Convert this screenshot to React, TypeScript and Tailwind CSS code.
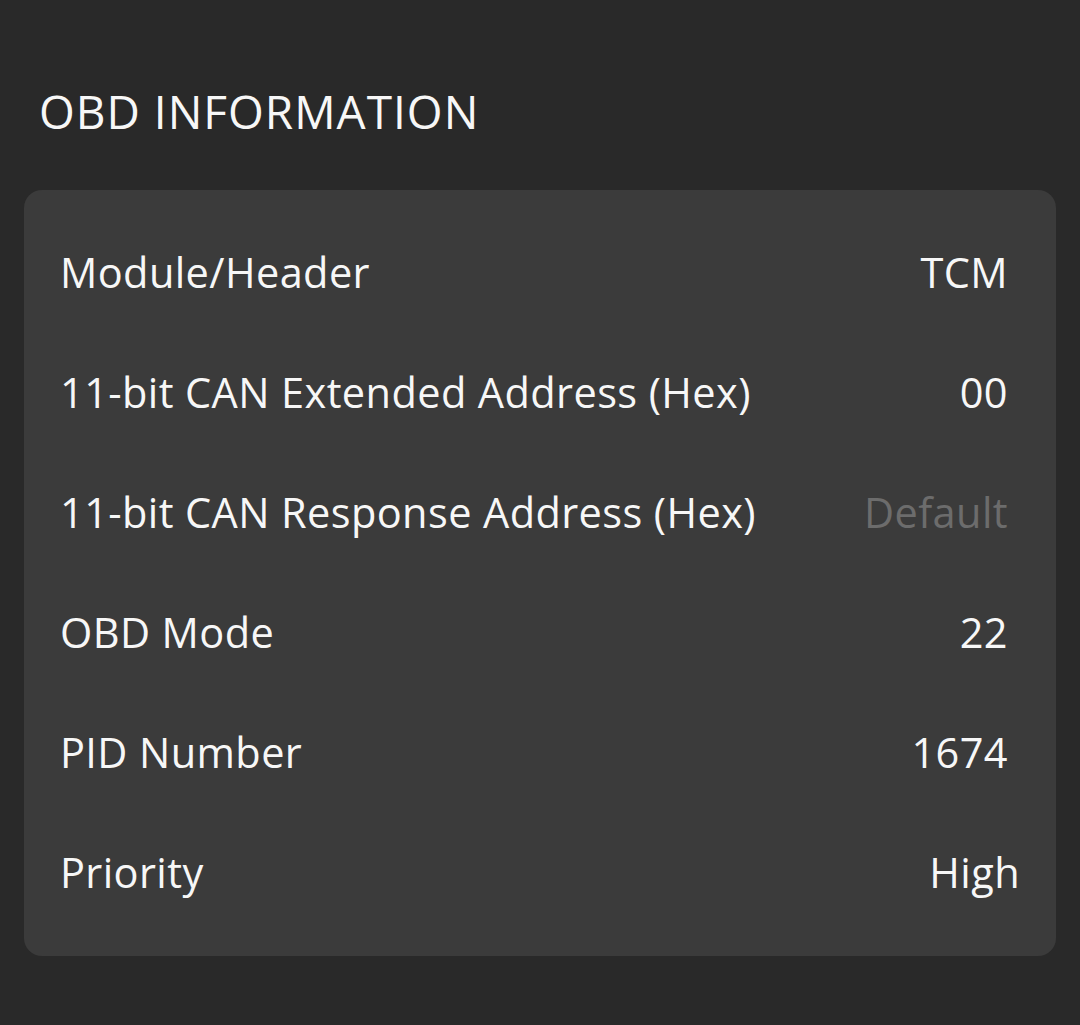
const rows = [
  { label: "Module/Header", value: "TCM" },
  { label: "11-bit CAN Extended Address (Hex)", value: "00" },
  { label: "11-bit CAN Response Address (Hex)", value: "Default", muted: true },
  { label: "OBD Mode", value: "22" },
  { label: "PID Number", value: "1674" },
  { label: "Priority", value: "High", wide: true },
];

const App = () => {
  return (
    <div
      className="min-h-screen w-full bg-[#292929] px-[24px] pt-[80px]"
      style={{ fontFamily: '"Open Sans", "Noto Sans", sans-serif' }}
    >
      {/* HEADER */}
      <h2 className="pl-[15px] text-[46px] leading-[63px] tracking-[1px] text-[#f7f7f7]">
        OBD INFORMATION
      </h2>

      {/* CARD */}
      <div className="mt-[47px] w-[1032px] rounded-[18px] bg-[#3b3b3b] pt-[22px] pb-[24px]">
        {rows.map((row) => (
          <div
            key={row.label}
            className={
              row.wide
                ? "flex h-[120px] items-center justify-between pl-[36px] pr-[36px]"
                : "flex h-[120px] items-center justify-between pl-[36px] pr-[48px]"
            }
          >
            <span className="text-[41.5px] tracking-[0.4px] text-[#f7f7f7]">
              {row.label}
            </span>
            <span
              className={
                row.muted
                  ? "text-[41.5px] tracking-[0.4px] text-[#6c6c6c]"
                  : "text-[41.5px] tracking-[0.4px] text-[#f7f7f7]"
              }
            >
              {row.value}
            </span>
          </div>
        ))}
      </div>
    </div>
  );
};

export default App;
